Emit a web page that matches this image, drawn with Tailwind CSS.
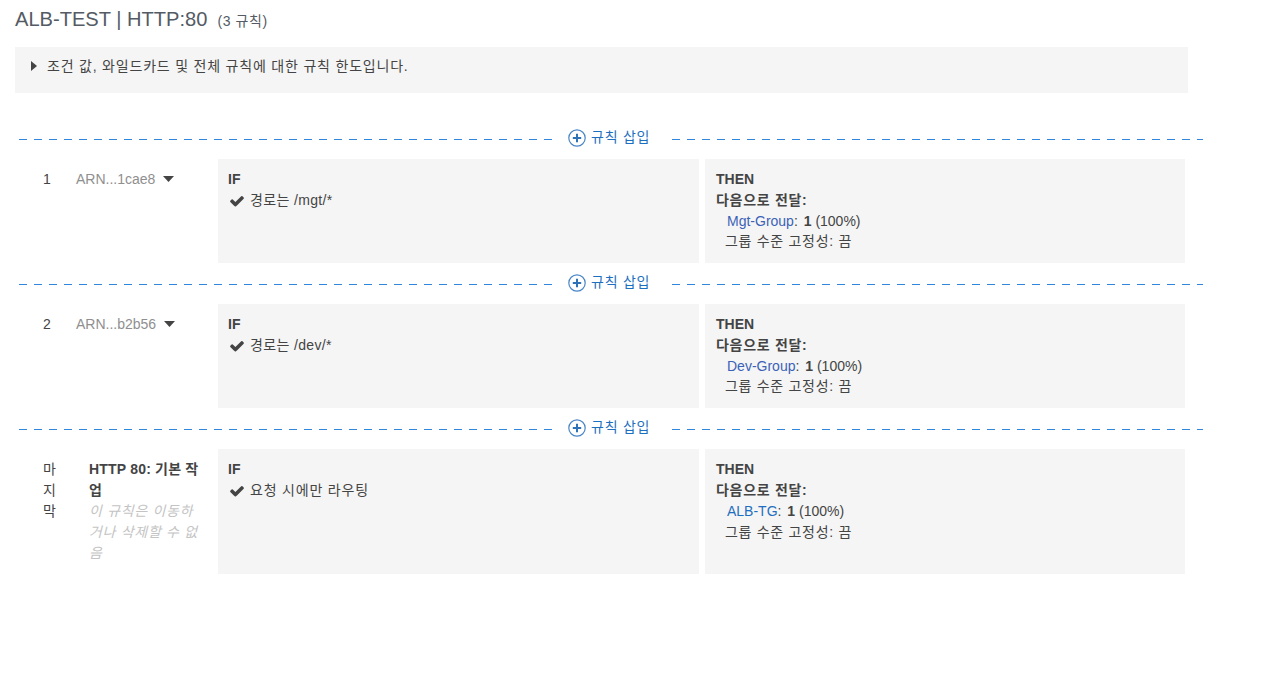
<!DOCTYPE html>
<html>
<head>
<meta charset="utf-8">
<title>ALB-TEST | HTTP:80</title>
<script src="https://cdn.jsdelivr.net/npm/@tailwindcss/browser@4"></script>
</head>
<body class="bg-white font-['Liberation_Sans','Noto_Sans_CJK_KR',sans-serif] text-[14px] leading-[21px] text-[#444]">
<div class="w-[1278px] h-[689px] overflow-hidden pl-[15px]">
	<h1 class="flex items-baseline h-[47px] pt-[6px] text-[20.1px] leading-[26px] text-[#545b64]">ALB-TEST | HTTP:80<span class="ml-[10px] text-[14px] tracking-[.6px]">(3 규칙)</span></h1>
	<div class="flex items-center h-[46px] w-[1173px] bg-[#f5f5f5] pl-[16px] pb-[8px]">
		<svg class="mr-[10px]" width="6" height="10" viewBox="0 0 6 10"><path d="M0 0L6 5L0 10Z" fill="#444"/></svg>
		<span class="tracking-[.8px]">조건 값, 와일드카드 및 전체 규칙에 대한 규칙 한도입니다.</span>
	</div>

	<!-- first insert row -->
	<div class="flex items-center h-[41px] mt-[25px] pl-[4px]">
		<div class="w-[534px] h-px mt-[2px] bg-[repeating-linear-gradient(90deg,#2f86dc_0,#2f86dc_8px,transparent_8px,transparent_15px)]"></div>
		<div class="flex items-center w-[119px] pl-[15px] mb-[2px] text-[#1e6fc0]">
			<svg class="mr-[5px]" width="18" height="18" viewBox="0 0 18 18"><circle cx="9" cy="9" r="8.2" fill="none" stroke="#4a86c5" stroke-width="1.2"/><path d="M9 4.8V13.2M4.8 9H13.2" stroke="#2e73b8" stroke-width="2"/></svg>
			<span class="tracking-[.75px]">규칙 삽입</span>
		</div>
		<div class="w-[531px] h-px mt-[2px] bg-[repeating-linear-gradient(90deg,#2f86dc_0,#2f86dc_8px,transparent_8px,transparent_15px)]"></div>
	</div>

	<!-- rule 1 -->
	<div class="flex h-[104px]">
		<div class="w-[203px] flex pt-[10px]">
			<div class="w-[61px] pl-[28px]">1</div>
			<div class="text-[#8f8f8f]">ARN...1cae8</div>
			<svg class="ml-[8px] mt-[7px]" width="11" height="6" viewBox="0 0 11 6"><path d="M0 0H11L5.5 6Z" fill="#444"/></svg>
		</div>
		<div class="w-[481px] bg-[#f5f5f5] pl-[10px] pt-[10px]">
			<div class="font-bold">IF</div>
			<div class="flex items-center">
				<svg class="ml-[1px] mr-[5px]" width="16" height="16" viewBox="0 0 1792 1792"><path d="M1671 566q0 40-28 68l-724 724-136 136q-28 28-68 28t-68-28l-136-136-362-362q-28-28-28-68t28-68l136-136q28-28 68-28t68 28l294 295 656-657q28-28 68-28t68 28l136 136q28 28 28 68z" fill="#444"/></svg>
				<span class="tracking-[.35px]">경로는 /mgt/*</span>
			</div>
		</div>
		<div class="w-[480px] ml-[6px] bg-[#f5f5f5] pl-[11px] pt-[10px]">
			<div class="font-bold">THEN</div>
			<div class="font-bold tracking-[.7px]">다음으로 전달:</div>
			<div class="pl-[11px]"><span class="text-[#3b62b8]">Mgt-Group</span>: <b class="ml-[2px]">1</b> (100%)</div>
			<div class="pl-[9px] -mt-px tracking-[.7px]">그룹 수준 고정성: 끔</div>
		</div>
	</div>

	<!-- second insert row -->
	<div class="flex items-center h-[41px] pl-[4px]">
		<div class="w-[534px] h-px mt-[2px] bg-[repeating-linear-gradient(90deg,#2f86dc_0,#2f86dc_8px,transparent_8px,transparent_15px)]"></div>
		<div class="flex items-center w-[119px] pl-[15px] mb-[2px] text-[#1e6fc0]">
			<svg class="mr-[5px]" width="18" height="18" viewBox="0 0 18 18"><circle cx="9" cy="9" r="8.2" fill="none" stroke="#4a86c5" stroke-width="1.2"/><path d="M9 4.8V13.2M4.8 9H13.2" stroke="#2e73b8" stroke-width="2"/></svg>
			<span class="tracking-[.75px]">규칙 삽입</span>
		</div>
		<div class="w-[531px] h-px mt-[2px] bg-[repeating-linear-gradient(90deg,#2f86dc_0,#2f86dc_8px,transparent_8px,transparent_15px)]"></div>
	</div>

	<!-- rule 2 -->
	<div class="flex h-[104px]">
		<div class="w-[203px] flex pt-[10px]">
			<div class="w-[61px] pl-[28px]">2</div>
			<div class="text-[#8f8f8f]">ARN...b2b56</div>
			<svg class="ml-[8px] mt-[7px]" width="11" height="6" viewBox="0 0 11 6"><path d="M0 0H11L5.5 6Z" fill="#444"/></svg>
		</div>
		<div class="w-[481px] bg-[#f5f5f5] pl-[10px] pt-[10px]">
			<div class="font-bold">IF</div>
			<div class="flex items-center">
				<svg class="ml-[1px] mr-[5px]" width="16" height="16" viewBox="0 0 1792 1792"><path d="M1671 566q0 40-28 68l-724 724-136 136q-28 28-68 28t-68-28l-136-136-362-362q-28-28-28-68t28-68l136-136q28-28 68-28t68 28l294 295 656-657q28-28 68-28t68 28l136 136q28 28 28 68z" fill="#444"/></svg>
				<span class="tracking-[.35px]">경로는 /dev/*</span>
			</div>
		</div>
		<div class="w-[480px] ml-[6px] bg-[#f5f5f5] pl-[11px] pt-[10px]">
			<div class="font-bold">THEN</div>
			<div class="font-bold tracking-[.7px]">다음으로 전달:</div>
			<div class="pl-[11px]"><span class="text-[#3b62b8]">Dev-Group</span>: <b class="ml-[2px]">1</b> (100%)</div>
			<div class="pl-[9px] -mt-px tracking-[.7px]">그룹 수준 고정성: 끔</div>
		</div>
	</div>

	<!-- third insert row -->
	<div class="flex items-center h-[41px] pl-[4px]">
		<div class="w-[534px] h-px mt-[2px] bg-[repeating-linear-gradient(90deg,#2f86dc_0,#2f86dc_8px,transparent_8px,transparent_15px)]"></div>
		<div class="flex items-center w-[119px] pl-[15px] mb-[2px] text-[#1e6fc0]">
			<svg class="mr-[5px]" width="18" height="18" viewBox="0 0 18 18"><circle cx="9" cy="9" r="8.2" fill="none" stroke="#4a86c5" stroke-width="1.2"/><path d="M9 4.8V13.2M4.8 9H13.2" stroke="#2e73b8" stroke-width="2"/></svg>
			<span class="tracking-[.75px]">규칙 삽입</span>
		</div>
		<div class="w-[531px] h-px mt-[2px] bg-[repeating-linear-gradient(90deg,#2f86dc_0,#2f86dc_8px,transparent_8px,transparent_15px)]"></div>
	</div>

	<!-- default rule -->
	<div class="flex h-[125px]">
		<div class="w-[203px] flex pt-[10px]">
			<div class="w-[74px] pl-[28px] pr-[31px]">마지막</div>
			<div class="w-[115px]">
				<div class="font-bold tracking-[.2px]">HTTP 80: 기본 작업</div>
				<div class="italic text-[#c4c4c4] tracking-[.7px]">이 규칙은 이동하거나 삭제할 수 없음</div>
			</div>
		</div>
		<div class="w-[481px] bg-[#f5f5f5] pl-[10px] pt-[10px]">
			<div class="font-bold">IF</div>
			<div class="flex items-center">
				<svg class="ml-[1px] mr-[5px]" width="16" height="16" viewBox="0 0 1792 1792"><path d="M1671 566q0 40-28 68l-724 724-136 136q-28 28-68 28t-68-28l-136-136-362-362q-28-28-28-68t28-68l136-136q28-28 68-28t68 28l294 295 656-657q28-28 68-28t68 28l136 136q28 28 28 68z" fill="#444"/></svg>
				<span class="tracking-[.8px]">요청 시에만 라우팅</span>
			</div>
		</div>
		<div class="w-[480px] ml-[6px] bg-[#f5f5f5] pl-[11px] pt-[10px]">
			<div class="font-bold">THEN</div>
			<div class="font-bold tracking-[.7px]">다음으로 전달:</div>
			<div class="pl-[11px]"><span class="text-[#1e6fc0]">ALB-TG</span>: <b class="ml-[2px]">1</b> (100%)</div>
			<div class="pl-[9px] tracking-[.7px]">그룹 수준 고정성: 끔</div>
		</div>
	</div>
</div>
</body>
</html>
